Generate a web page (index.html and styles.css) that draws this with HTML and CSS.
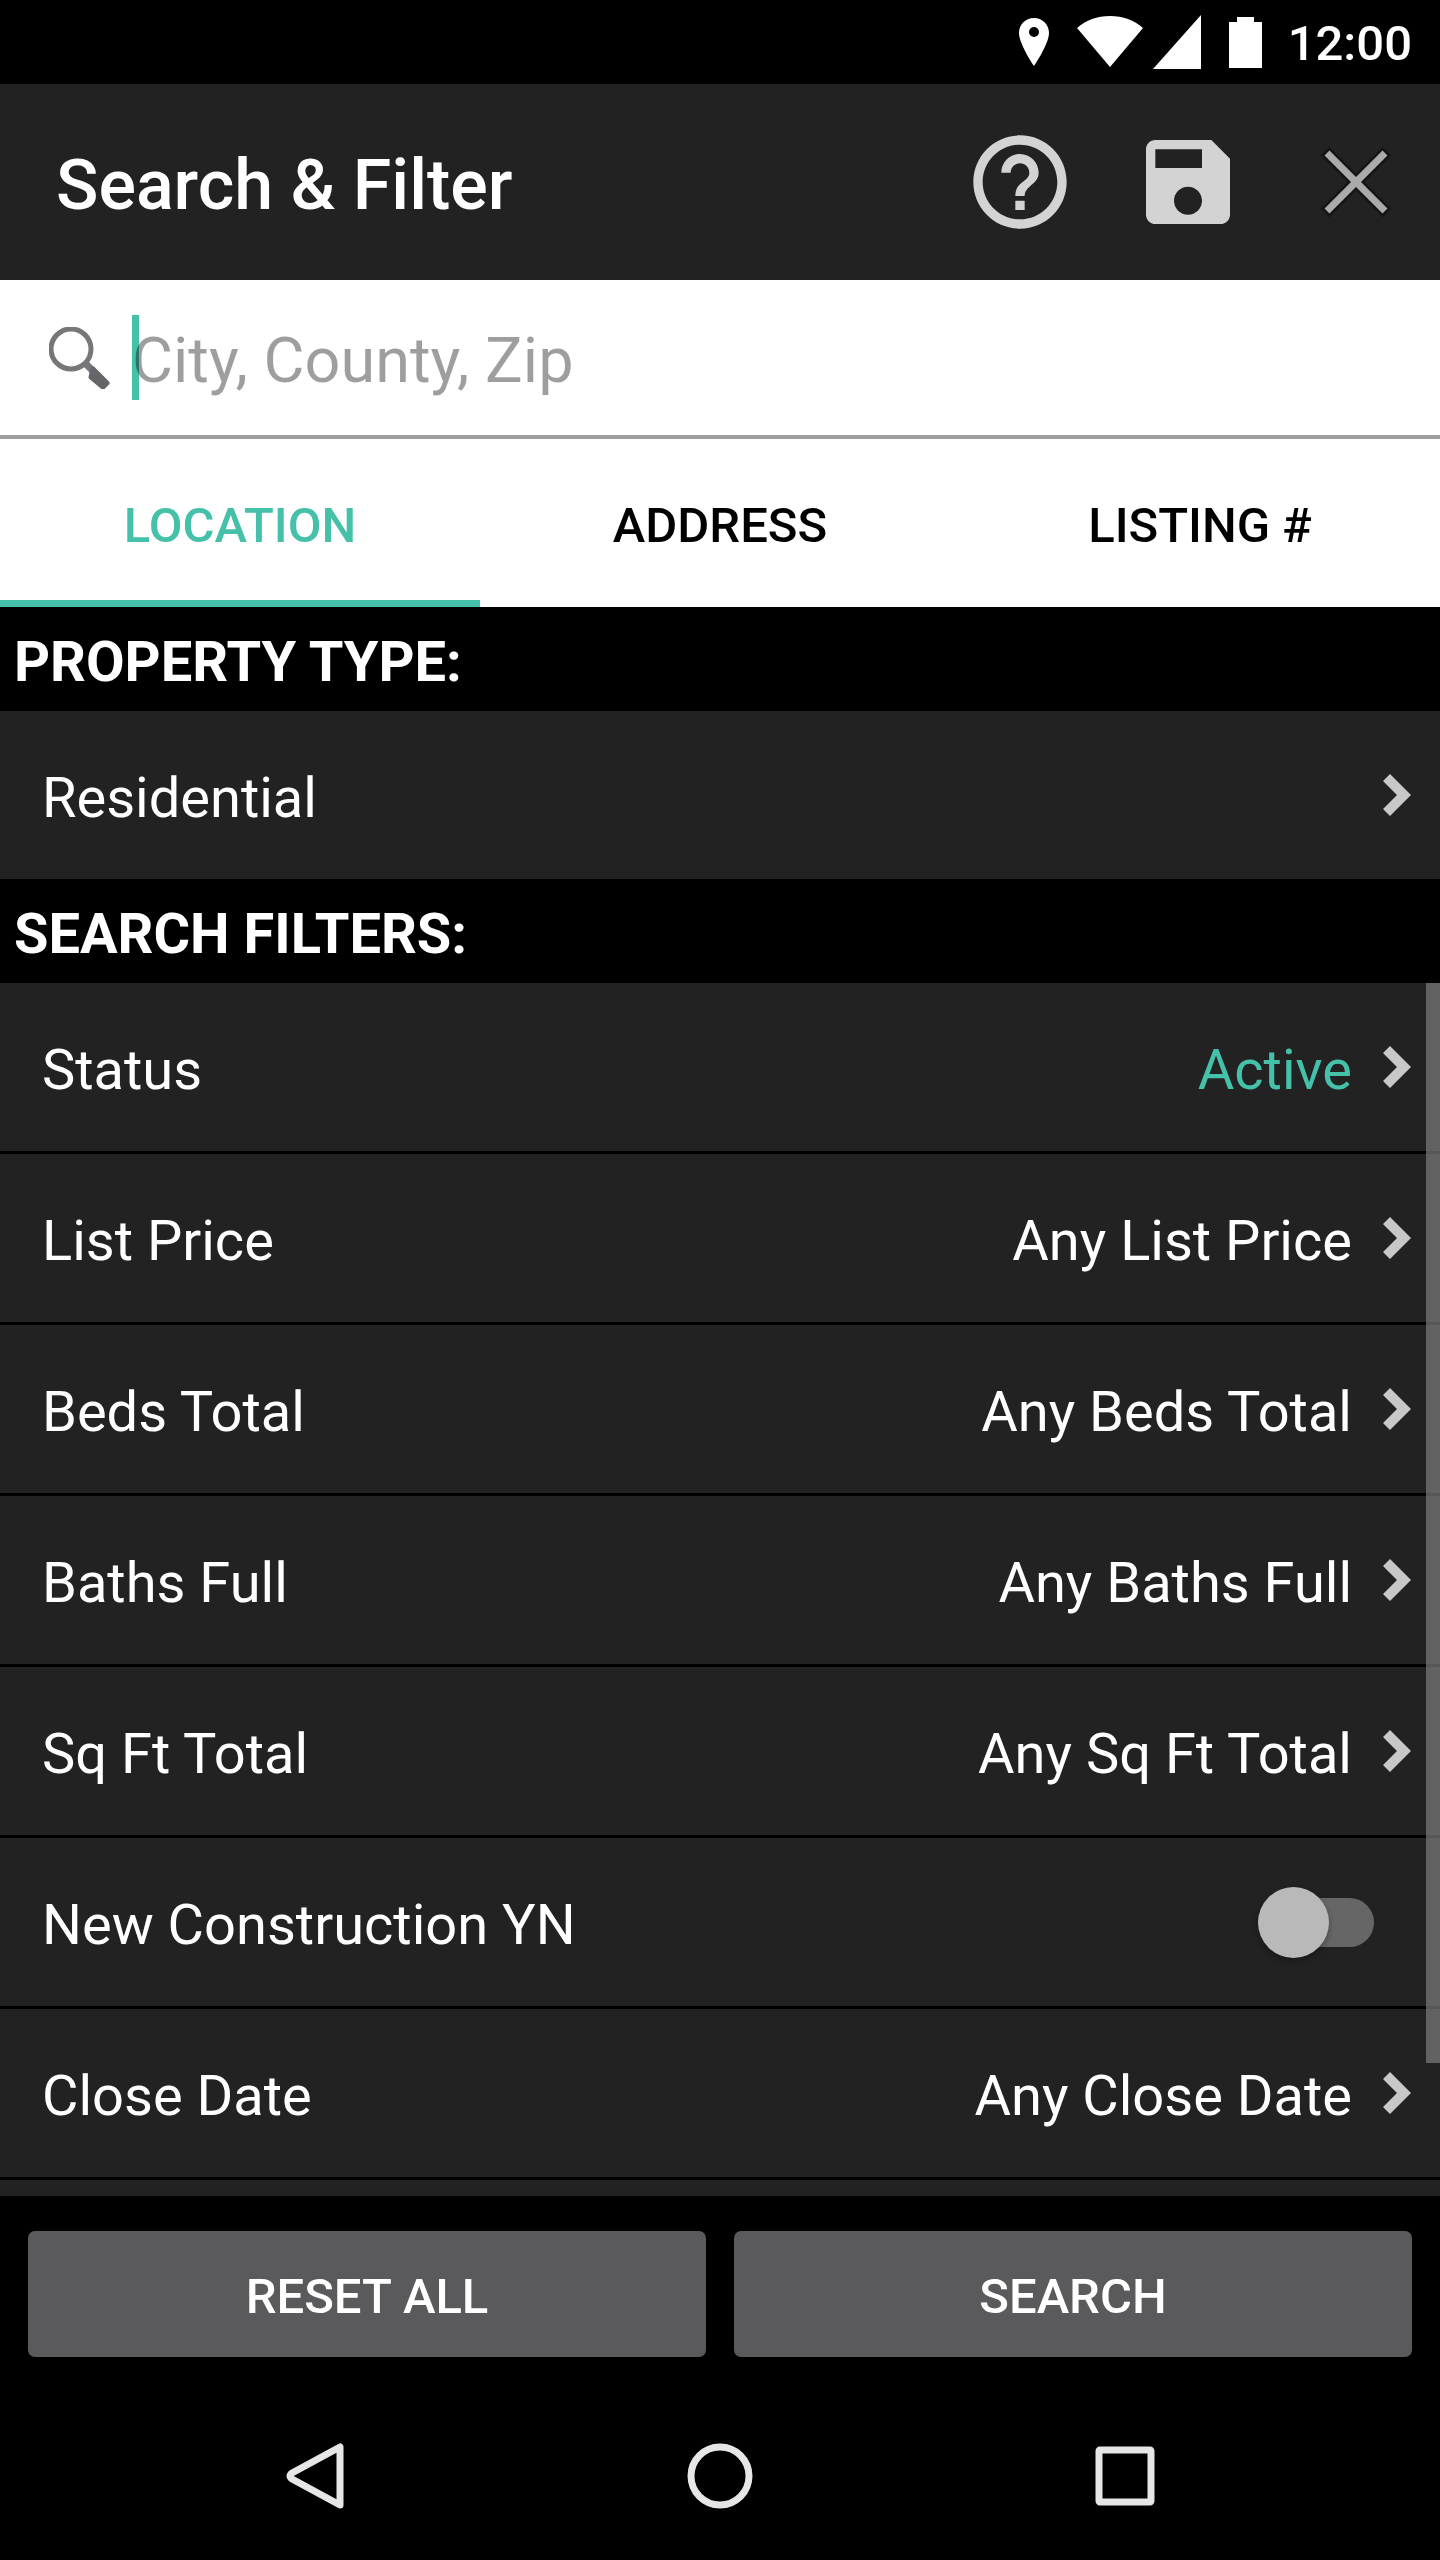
FILE: index.html
```
<!DOCTYPE html>
<html lang="en">
<head>
    <meta charset="UTF-8">
    <meta name="viewport" content="width=device-width, initial-scale=1.0">
    <title>Search &amp; Filter</title>
    <link rel="stylesheet" href="styles.css">
</head>
<body>
    <svg class="defs" width="0" height="0" aria-hidden="true">
        <symbol id="chevron" viewBox="0 0 28 42">
            <path d="M0 7L7 0L28 21L7 42L0 35L14 21Z" fill="#c8c8c8"/>
        </symbol>
    </svg>

    <div class="status-bar">
        <svg class="pin" width="30" height="48" viewBox="0 0 30 48"><path fill="#fff" fill-rule="evenodd" d="M15 0C6 0 0 7 0 15C0 26 15 48 15 48S30 26 30 15C30 7 24 0 15 0ZM15 9A5 5 0 1 1 15 19A5 5 0 0 1 15 9Z"/></svg>
        <svg class="wifi" width="66" height="52" viewBox="0 0 66 52"><path fill="#fff" d="M0 12C9 4 20 0 33 0S57 4 66 12L33 51Z"/></svg>
        <svg class="signal" width="48" height="54" viewBox="0 0 48 54"><path fill="#fff" d="M48 0V54H0Z"/></svg>
        <svg class="battery" width="33" height="51" viewBox="0 0 33 51"><path fill="#fff" d="M8 0H25V5H33V51H0V5H8Z"/></svg>
        <span class="clock">12:00</span>
    </div>

    <header>
        <h1>Search &amp; Filter</h1>
        <button aria-label="Help">
            <svg width="112" height="112" viewBox="0 0 24 24"><path fill="#d3d3d3" d="M11 18h2v-2h-2v2zm1-16C6.480 2 2 6.480 2 12s4.480 10 10 10 10-4.480 10-10S17.520 2 12 2zm0 18c-4.410 0-8-3.590-8-8s3.590-8 8-8 8 3.590 8 8-3.590 8-8 8zm0-14c-2.210 0-4 1.790-4 4h2c0-1.100.9-2 2-2s2 .9 2 2c0 2-3 1.750-3 5h2c0-2.250 3-2.500 3-5 0-2.210-1.790-4-4-4z"/></svg>
        </button>
        <button aria-label="Save">
            <svg width="112" height="112" viewBox="0 0 24 24"><path fill="#d3d3d3" d="M17 3H5c-1.110 0-2 .9-2 2v14c0 1.100.890 2 2 2h14c1.100 0 2-.9 2-2V7l-4-4zm-5 16c-1.660 0-3-1.340-3-3s1.340-3 3-3 3 1.340 3 3-1.340 3-3 3zm3-10H5V5h10v4z"/></svg>
        </button>
        <button aria-label="Close">
            <svg width="72" height="72" viewBox="0 0 72 72"><path d="M5 5L67 67M67 5L5 67" stroke="#151515" stroke-width="12"/><path d="M7 7L65 65M65 7L7 65" stroke="#aaa" stroke-width="7"/></svg>
        </button>
    </header>

    <div class="search-box">
        <label for="query" aria-label="Search location">
            <svg width="62" height="62" viewBox="0 0 62 62"><circle cx="22" cy="22" r="20" fill="none" stroke="#77777a" stroke-width="5"/><path d="M35 35L44 44" stroke="#77777a" stroke-width="7"/><path d="M44 42L58 56L54 60L42 50Z" fill="#66666a" stroke="#66666a" stroke-width="5" stroke-linejoin="round"/></svg>
        </label>
        <div class="field">
            <input type="text" id="query" placeholder="City, County, Zip">
        </div>
    </div>

    <nav class="tabs">
        <button class="active">LOCATION</button>
        <button>ADDRESS</button>
        <button>LISTING #</button>
    </nav>

    <h2>PROPERTY TYPE:</h2>
    <button class="row">
        <span class="name">Residential</span>
        <svg width="28" height="42"><use href="#chevron"/></svg>
    </button>

    <h2>SEARCH FILTERS:</h2>
    <div class="filters">
        <button class="row">
            <span class="name">Status</span>
            <span class="value selected">Active</span>
            <svg width="28" height="42"><use href="#chevron"/></svg>
        </button>
        <button class="row">
            <span class="name">List Price</span>
            <span class="value">Any List Price</span>
            <svg width="28" height="42"><use href="#chevron"/></svg>
        </button>
        <button class="row">
            <span class="name">Beds Total</span>
            <span class="value">Any Beds Total</span>
            <svg width="28" height="42"><use href="#chevron"/></svg>
        </button>
        <button class="row">
            <span class="name">Baths Full</span>
            <span class="value">Any Baths Full</span>
            <svg width="28" height="42"><use href="#chevron"/></svg>
        </button>
        <button class="row">
            <span class="name">Sq Ft Total</span>
            <span class="value">Any Sq Ft Total</span>
            <svg width="28" height="42"><use href="#chevron"/></svg>
        </button>
        <div class="row switch-row">
            <label class="name" for="newConstruction">New Construction YN</label>
            <input type="checkbox" id="newConstruction" class="switch">
        </div>
        <button class="row">
            <span class="name">Close Date</span>
            <span class="value">Any Close Date</span>
            <svg width="28" height="42"><use href="#chevron"/></svg>
        </button>
        <div class="scroll-thumb"></div>
    </div>

    <div class="actions">
        <button>RESET ALL</button>
        <button>SEARCH</button>
    </div>

    <footer>
        <button aria-label="Back">
            <svg width="66" height="66" viewBox="0 0 66 66"><path d="M58 4V62L10 36Q6 33 10 30Z" fill="none" stroke="#e6e6e6" stroke-width="7" stroke-linejoin="round"/></svg>
        </button>
        <button aria-label="Home">
            <svg width="66" height="66" viewBox="0 0 66 66"><circle cx="33" cy="33" r="29" fill="none" stroke="#e6e6e6" stroke-width="7"/></svg>
        </button>
        <button aria-label="Recent apps">
            <svg width="66" height="66" viewBox="0 0 66 66"><rect x="7" y="7" width="52" height="52" rx="1" fill="none" stroke="#e6e6e6" stroke-width="7" stroke-linejoin="round"/></svg>
        </button>
    </footer>
</body>
</html>
```
FILE: styles.css
```
* {
    box-sizing: border-box;
}
body {
    display: flex;
    flex-direction: column;
    height: 100vh;
    margin: 0;
    background-color: black;
    color: white;
    font-family: Roboto, sans-serif;
    font-size: 56px;
}
button {
    margin: 0;
    padding: 0;
    border: none;
    background: none;
    color: inherit;
    font: inherit;
    cursor: pointer;
}
svg {
    display: block;
    flex: none;
}
.defs {
    position: absolute;
}
.status-bar {
    display: flex;
    flex: none;
    justify-content: flex-end;
    align-items: center;
    height: 84px;
    padding-right: 28px;
}
.wifi {
    margin-left: 28px;
}
.signal {
    margin-left: 10px;
}
.battery {
    margin-left: 28px;
}
.clock {
    margin-left: 26px;
    padding-top: 2px;
    font-size: 49px;
    font-weight: 500;
}
header {
    display: flex;
    flex: none;
    align-items: center;
    height: 196px;
    padding-left: 56px;
    background-color: #222;
}
h1 {
    flex: 1;
    margin: 0;
    padding-top: 6px;
    font-size: 70px;
    font-weight: 500;
}
header button {
    display: flex;
    justify-content: center;
    align-items: center;
    width: 168px;
    height: 168px;
}
.search-box {
    display: flex;
    flex: none;
    align-items: center;
    gap: 21px;
    height: 159px;
    padding: 0 49px;
    border-bottom: 4px solid #9e9e9e;
    background-color: white;
}
.field {
    position: relative;
    flex: 1;
}
/* wide text cursor, sits behind the placeholder */
.field::before {
    content: "";
    position: absolute;
    top: 0;
    left: 0;
    width: 7px;
    height: 100%;
    background-color: #45c1aa;
}
.field input {
    position: relative;
    display: block;
    width: 100%;
    height: 85px;
    padding: 6px 0 0;
    border: none;
    outline: none;
    background: none;
    color: black;
    font: inherit;
    font-size: 63px;
    caret-color: #45c1aa;
}
.field input::placeholder {
    color: rgba(0, 0, 0, 0.38);
    opacity: 1;
}
.tabs {
    display: flex;
    flex: none;
    height: 168px;
    background-color: white;
    color: black;
}
.tabs button {
    flex: 1;
    padding-top: 12px;
    border-bottom: 7px solid transparent;
    font-size: 49px;
    font-weight: 500;
}
.tabs .active {
    border-bottom-color: #45c1aa;
    color: #45c1aa;
}
h2 {
    flex: none;
    margin: 0;
    padding: 6px 14px 0;
    font-size: 56px;
    font-weight: bold;
    line-height: 98px;
}
.row {
    display: flex;
    flex: none;
    align-items: center;
    width: 100%;
    height: 168px;
    padding: 0 29px 0 42px;
    background-color: #222;
    text-align: left;
}
.name {
    flex: 1;
    padding-top: 6px;
}
.value {
    padding-top: 6px;
    margin-right: 31px;
}
.selected {
    color: #45c1aa;
}
.filters {
    position: relative;
    flex: 1;
    min-height: 0;
    overflow: hidden;
    background-color: #222;
}
.filters .row {
    height: 171px;
    border-bottom: 3px solid black;
}
.filters .switch-row {
    padding-right: 66px;
}
.switch {
    position: relative;
    appearance: none;
    width: 98px;
    height: 49px;
    margin: 0;
    border-radius: 25px;
    background-color: #666;
}
.switch::before {
    content: "";
    position: absolute;
    top: -11px;
    left: -18px;
    width: 71px;
    height: 71px;
    border-radius: 50%;
    background-color: #b9b9b9;
    box-shadow: 0 3px 6px rgba(0, 0, 0, 0.3);
}
.switch:checked {
    background-color: #2a6f63;
}
.switch:checked::before {
    left: 45px;
    background-color: #45c1aa;
}
.scroll-thumb {
    position: absolute;
    top: 0;
    right: 0;
    width: 14px;
    height: 89%;
    background-color: rgba(130, 130, 130, 0.67);
}
.actions {
    display: flex;
    flex: none;
    gap: 28px;
    padding: 35px 28px;
}
.actions button {
    flex: 1;
    height: 126px;
    padding-top: 4px;
    border-radius: 7px;
    background-color: #5a5a5c;
    font-size: 49px;
    font-weight: 500;
}
footer {
    display: flex;
    flex: none;
    height: 168px;
    padding: 0 112px;
}
footer button {
    display: flex;
    flex: 1;
    justify-content: center;
    align-items: center;
}
```
